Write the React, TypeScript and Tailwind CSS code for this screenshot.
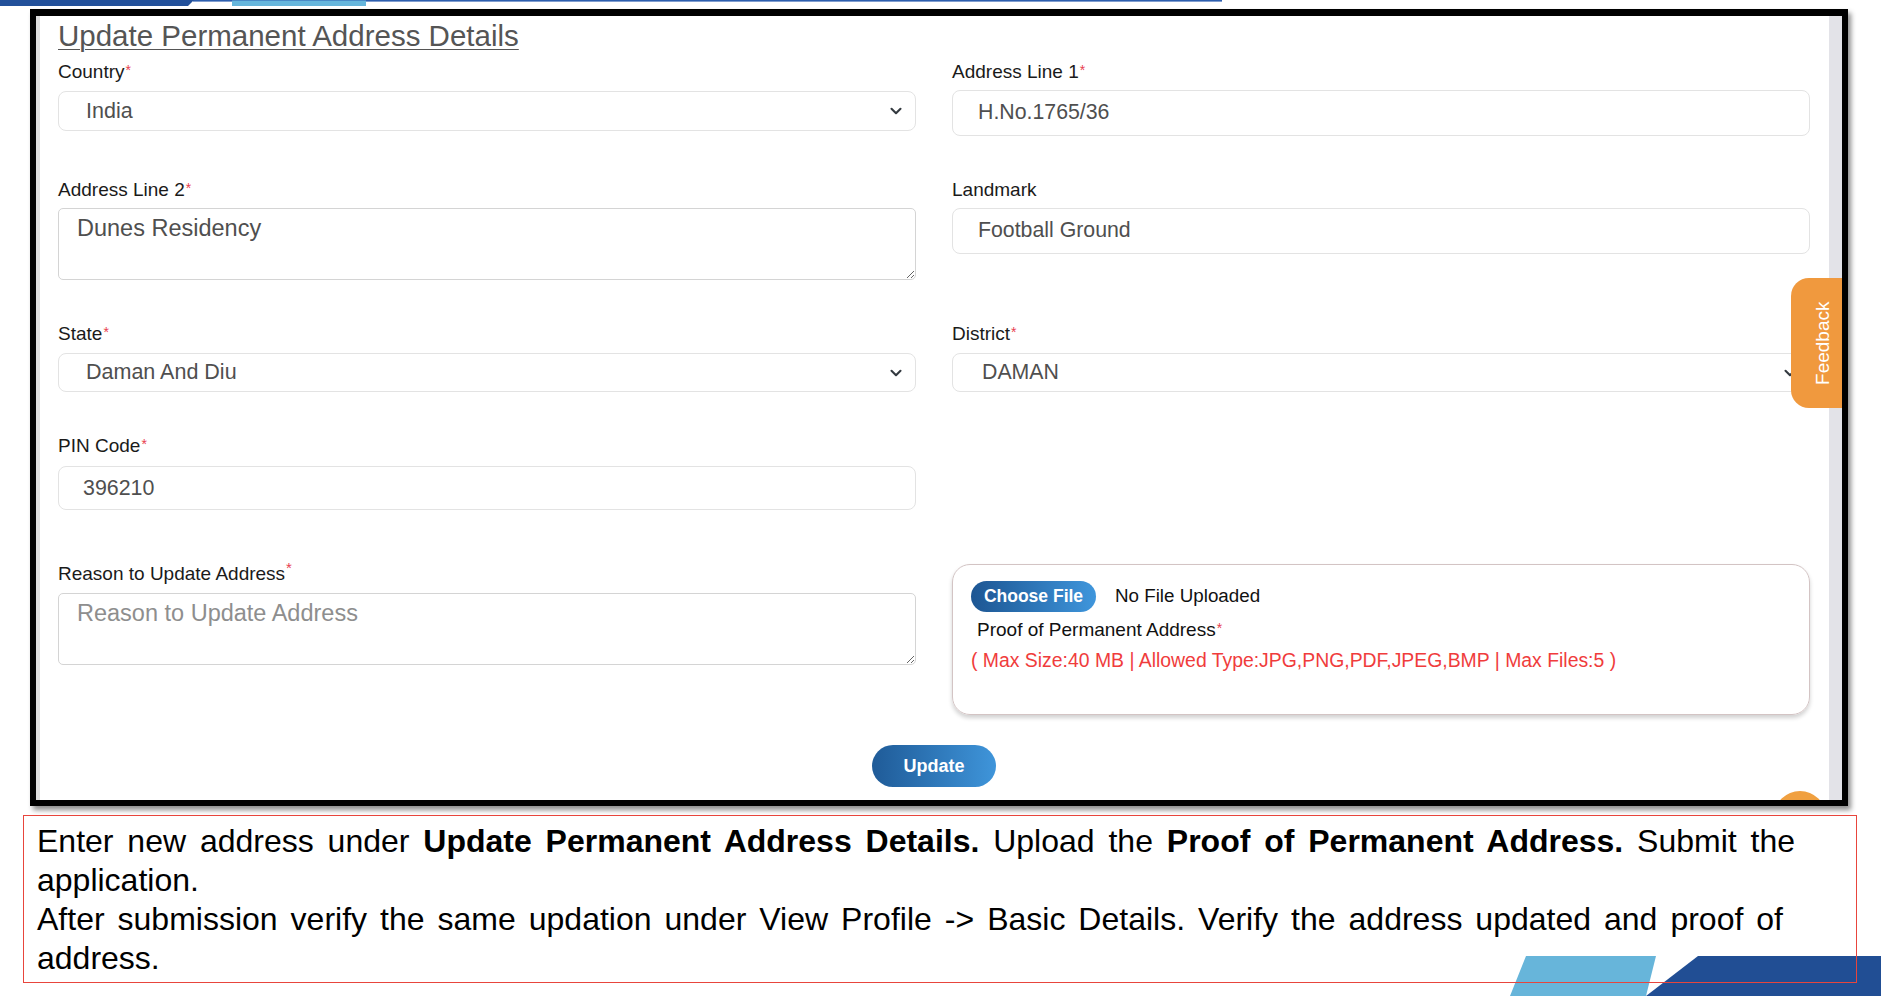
import React from "react";

function Req({ sup }: { sup?: boolean }) {
  return (
    <span
      className={
        sup
          ? "relative -top-[7px] ml-[1px] text-[15px] text-[#e8404f]"
          : "relative -top-[3px] ml-[1px] text-[14px] text-[#e8404f]"
      }
    >
      *
    </span>
  );
}

function Label({ text, req = true, sup }: { text: string; req?: boolean; sup?: boolean }) {
  return (
    <div className="h-[20px] whitespace-nowrap text-[19px] leading-[20px] text-[#1a1a1a]">
      {text}
      {req && <Req sup={sup} />}
    </div>
  );
}

function Chevron() {
  return (
    <svg width="16" height="12" viewBox="0 0 16 16" fill="none">
      <path d="m2 5 6 6 6-6" stroke="#343a40" strokeWidth="2.8" strokeLinecap="round" strokeLinejoin="round" />
    </svg>
  );
}

export default function App() {
  return (
    <div className="relative h-[996px] w-[1881px] overflow-hidden bg-white font-['Liberation_Sans',Arial,sans-serif]">
      {/* top decoration strip */}
      <svg className="block" width="1881" height="9" viewBox="0 0 1881 9">
        <rect x="193" y="0" width="1029" height="1.6" fill="#2d5eae" />
        <polygon points="0,0 194,0 188,6 0,6" fill="#22509a" />
        <rect x="232" y="0.5" width="134" height="5.5" fill="#66b6dc" />
      </svg>

      {/* bottom-right decorations */}
      <svg className="absolute left-0 top-0" width="1881" height="996" viewBox="0 0 1881 996">
        <polygon points="1526,956 1656,956 1646,996 1510,996" fill="#67b5da" />
        <polygon points="1698,956 1881,956 1881,996 1646,996" fill="#214e94" />
      </svg>

      {/* screenshot frame */}
      <div className="relative ml-[30px] flex h-[797px] w-[1818px] border-x-[6px] border-b-[6px] border-t-[7px] border-black bg-white shadow-[3px_4px_5px_rgba(0,0,0,0.45)]">
        <div className="relative flex-1 overflow-hidden border-l-[4px] border-[#dcdcdc] pl-[18px] pt-[4px]">
          <h1 className="text-[29.5px] leading-[32px] text-[#555] underline decoration-1 underline-offset-[3px]">
            Update Permanent Address Details
          </h1>

          <div className="mt-[10px] grid w-[1752px] grid-cols-2 gap-x-[36px] gap-y-[44px]">
            {/* Row 1 */}
            <div>
              <Label text="Country" />
              <div className="mt-[9px] flex h-[40px] items-center justify-between rounded-[8px] border border-[#e3e3e3] bg-white pl-[27px] pr-[11px] text-[21.5px] text-[#4f4f4f]">
                <span>India</span>
                <Chevron />
              </div>
            </div>
            <div>
              <Label text="Address Line 1" />
              <div className="mt-[8px] flex h-[46px] items-center rounded-[8px] border border-[#e3e3e3] bg-white pl-[25px] text-[21.3px] text-[#4f4f4f]">
                H.No.1765/36
              </div>
            </div>

            {/* Row 2 */}
            <div>
              <Label text="Address Line 2" />
              <textarea
                readOnly
                defaultValue="Dunes Residency"
                className="mt-[8px] block h-[72px] w-full resize-y rounded-[5px] border border-[#d4d4d4] px-[18px] py-[6px] text-[23.5px] leading-[26px] text-[#4f4f4f] outline-none"
              />
            </div>
            <div>
              <Label text="Landmark" req={false} />
              <div className="mt-[8px] flex h-[46px] items-center rounded-[8px] border border-[#e3e3e3] bg-white pl-[25px] text-[21.3px] text-[#4f4f4f]">
                Football Ground
              </div>
            </div>

            {/* Row 3 */}
            <div>
              <Label text="State" />
              <div className="mt-[9px] flex h-[39px] items-center justify-between rounded-[8px] border border-[#e3e3e3] bg-white pl-[27px] pr-[11px] text-[21.5px] text-[#4f4f4f]">
                <span>Daman And Diu</span>
                <Chevron />
              </div>
            </div>
            <div>
              <Label text="District" />
              <div className="mt-[9px] flex h-[39px] items-center justify-between rounded-[8px] border border-[#e3e3e3] bg-white pl-[29px] pr-[11px] text-[21.3px] text-[#4f4f4f]">
                <span>DAMAN</span>
                <Chevron />
              </div>
            </div>

            {/* Row 4 */}
            <div>
              <Label text="PIN Code" />
              <div className="mt-[10px] flex h-[44px] items-center rounded-[8px] border border-[#e3e3e3] bg-white pl-[24px] text-[21.4px] text-[#4f4f4f]">
                396210
              </div>
            </div>
            <div />

            {/* Row 5 */}
            <div className="mt-[10px]">
              <Label text="Reason to Update Address" sup />
              <textarea
                readOnly
                placeholder="Reason to Update Address"
                className="mt-[9px] block h-[72px] w-full resize-y rounded-[5px] border border-[#d4d4d4] px-[18px] py-[6px] text-[23.5px] leading-[26px] text-[#4f4f4f] outline-none placeholder:text-[#8e8e8e]"
              />
            </div>
            <div className="mt-[10px] h-[151px] rounded-[18px] border-[1.5px] border-[#d3c4c4] pl-[18px] pt-[16px] shadow-[0_3px_4px_rgba(0,0,0,0.18)]">
              <div className="flex items-center">
                <div className="flex h-[31px] w-[125px] items-center justify-center rounded-full bg-linear-to-r from-[#1d5693] to-[#3f96dc] text-[17.5px] font-bold text-white">
                  Choose File
                </div>
                <span className="ml-[19px] text-[18.8px] text-[#111]">No File Uploaded</span>
              </div>
              <div className="ml-[6px] mt-[8px] h-[20px] text-[19px] leading-[20px] text-[#111]">
                Proof of Permanent Address
                <Req />
              </div>
              <div className="mt-[10px] h-[20px] whitespace-nowrap text-[19.4px] leading-[20px] text-[#f03c3c]">
                ( Max Size:40 MB | Allowed Type:JPG,PNG,PDF,JPEG,BMP | Max Files:5 )
              </div>
            </div>
          </div>

          <div className="mt-[30px] flex w-[1752px] justify-center">
            <button className="h-[42px] w-[124px] rounded-full bg-linear-to-r from-[#1f5b98] to-[#3f95da] text-[18px] font-bold text-white">
              Update
            </button>
          </div>

          {/* scroll-to-top button, clipped */}
          <div className="absolute left-[1734px] top-[775px] flex h-[52px] w-[52px] items-center justify-center rounded-full bg-[#f0a040]">
            <div className="h-[30px] w-[30px] rounded-full border-2 border-[#f6c27e]" />
          </div>
        </div>
        <div className="w-[13px] bg-[#e3e3e8]" />

        {/* feedback tab */}
        <div className="absolute left-[1755px] top-[262px] flex h-[130px] w-[51px] items-center justify-center rounded-l-[18px] bg-[#f0993e] pl-[14px]">
          <span className="-rotate-90 whitespace-nowrap text-[19px] text-white">Feedback</span>
        </div>
      </div>

      {/* instruction text box */}
      <div className="relative ml-[23px] mt-[9px] h-[168px] w-[1834px] border border-[#e8453c] pl-[13px] pr-[61px] pt-[6px]">
        <div className="text-justify text-[32px] leading-[39px] text-black">
          <p>
            Enter new address under <b>Update Permanent Address Details.</b> Upload the{" "}
            <b>Proof of Permanent Address.</b> Submit the application.
          </p>
          <p className="mr-[12px]">
            After submission verify the same updation under View Profile -&gt; Basic Details. Verify the address
            updated and proof of address.
          </p>
        </div>
      </div>
    </div>
  );
}
